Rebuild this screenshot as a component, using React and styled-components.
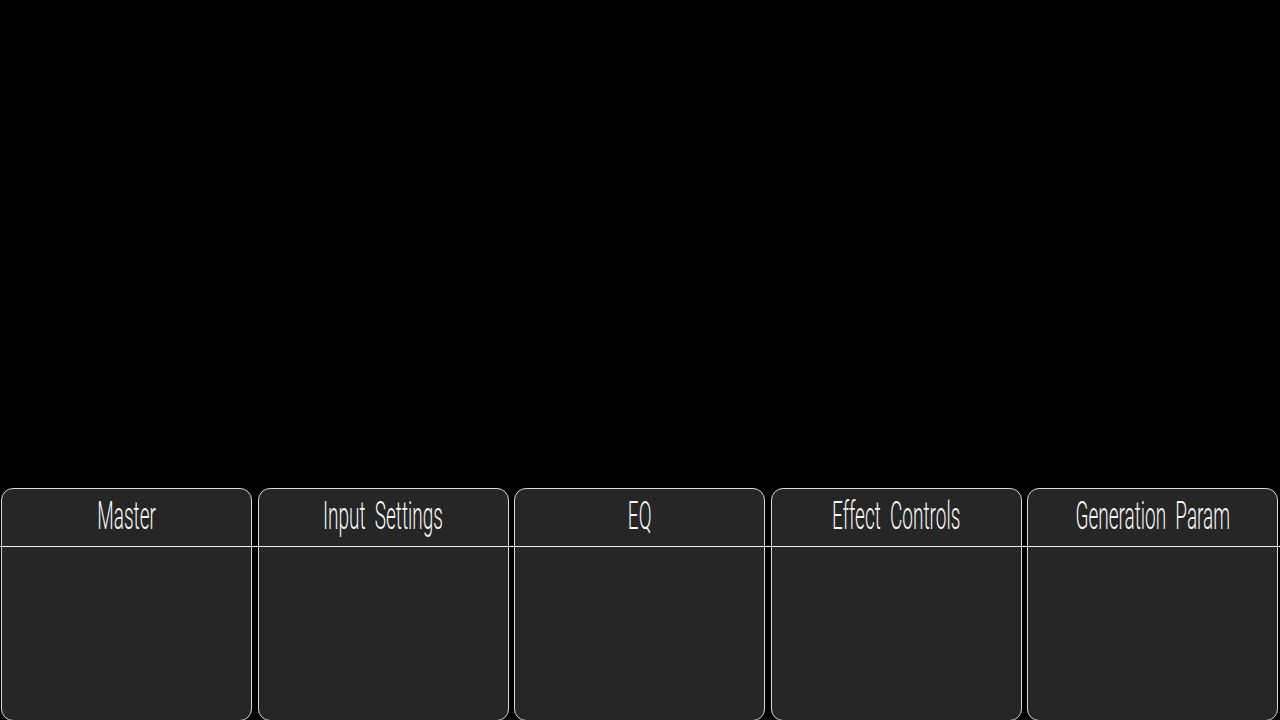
import React from 'react';
import styled, { createGlobalStyle } from 'styled-components';

const PANELS = ['Master', 'Input Settings', 'EQ', 'Effect Controls', 'Generation Param'];

const GlobalStyle = createGlobalStyle`
  html, body {
    margin: 0;
    padding: 0;
    background: #000;
  }
  #root {
    height: 100vh;
  }
`;

const Screen = styled.div`
  height: 100%;
  display: flex;
  flex-direction: column;
  background: #000;
  overflow: hidden;
`;

const Stage = styled.div`
  flex: 1;
`;

const PanelRow = styled.div`
  position: relative;
  height: 232px;
  display: flex;
  justify-content: space-between;
  padding: 0 2px 0 1px;
`;

const Divider = styled.div`
  position: absolute;
  top: 58px;
  left: 0;
  right: 0;
  height: 1px;
  background: #f2f2f2;
`;

const Panel = styled.section`
  width: 251px;
  flex: none;
  display: flex;
  flex-direction: column;
  background: #262626;
  border: 1px solid #d9d9d9;
  border-radius: 12px;
  box-sizing: border-box;
  height: 233px;
`;

const PanelHeader = styled.div`
  height: 57px;
  display: flex;
  align-items: center;
  justify-content: center;
  padding-bottom: 3px;
  box-sizing: border-box;
`;

const PanelTitle = styled.h2`
  margin: 0;
  font-family: Roboto, "Liberation Sans", sans-serif;
  font-weight: 300;
  font-size: 38px;
  line-height: 1;
  word-spacing: 9px;
  color: #f6f6f6;
  white-space: nowrap;
  transform: scaleX(0.5);
`;

const PanelBody = styled.div`
  flex: 1;
`;

export default function App() {
  return (
    <>
      <GlobalStyle />
      <Screen>
        <Stage />
        <PanelRow>
          {PANELS.map((title) => (
            <Panel key={title}>
              <PanelHeader>
                <PanelTitle>{title}</PanelTitle>
              </PanelHeader>
              <PanelBody />
            </Panel>
          ))}
          <Divider />
        </PanelRow>
      </Screen>
    </>
  );
}
